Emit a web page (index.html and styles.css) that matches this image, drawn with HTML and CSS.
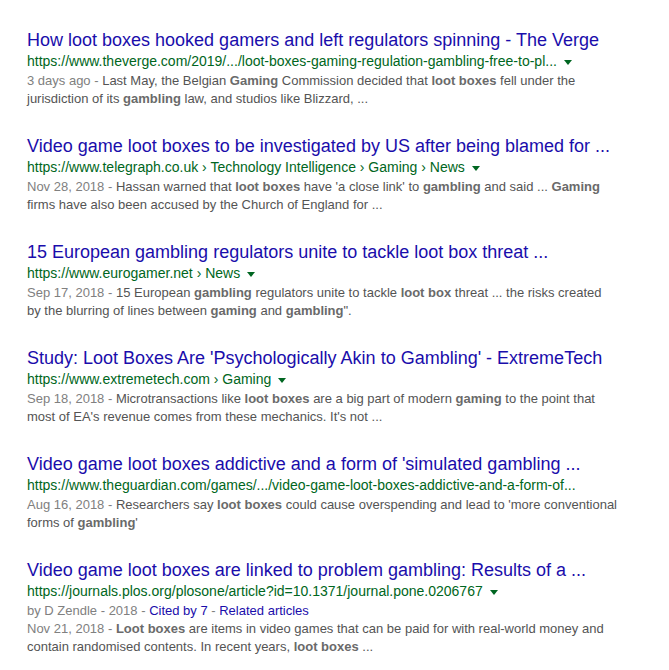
FILE: index.html
```html
<!DOCTYPE html>
<html>
<head>
    <meta charset="UTF-8">
    <meta name="viewport" content="width=device-width, initial-scale=1.0">
    <title>loot boxes gambling - Search</title>
    <link rel="stylesheet" href="styles.css">
</head>
<body>
    <div id="results">
        <div class="result">
            <h3 class="title"><a href="#">How loot boxes hooked gamers and left regulators spinning - The Verge</a></h3>
            <div class="url">https://www.theverge.com/2019/.../loot-boxes-gaming-regulation-gambling-free-to-pl... <span class="arrow"></span></div>
            <div class="snippet"><span class="date">3 days ago - </span>Last May, the Belgian <b>Gaming</b> Commission decided that <b>loot boxes</b> fell under the jurisdiction of its <b>gambling</b> law, and studios like Blizzard, ...</div>
        </div>
        <div class="result">
            <h3 class="title"><a href="#">Video game loot boxes to be investigated by US after being blamed for ...</a></h3>
            <div class="url">https://www.telegraph.co.uk › Technology Intelligence › Gaming › News <span class="arrow"></span></div>
            <div class="snippet"><span class="date">Nov 28, 2018 - </span>Hassan warned that <b>loot boxes</b> have 'a close link' to <b>gambling</b> and said ... <b>Gaming</b> firms have also been accused by the Church of England for ...</div>
        </div>
        <div class="result">
            <h3 class="title"><a href="#">15 European gambling regulators unite to tackle loot box threat ...</a></h3>
            <div class="url">https://www.eurogamer.net › News <span class="arrow"></span></div>
            <div class="snippet"><span class="date">Sep 17, 2018 - </span>15 European <b>gambling</b> regulators unite to tackle <b>loot box</b> threat ... the risks created by the blurring of lines between <b>gaming</b> and <b>gambling</b>".</div>
        </div>
        <div class="result">
            <h3 class="title"><a href="#">Study: Loot Boxes Are 'Psychologically Akin to Gambling' - ExtremeTech</a></h3>
            <div class="url">https://www.extremetech.com › Gaming <span class="arrow"></span></div>
            <div class="snippet"><span class="date">Sep 18, 2018 - </span>Microtransactions like <b>loot boxes</b> are a big part of modern <b>gaming</b> to the point that most of EA's revenue comes from these mechanics. It's not ...</div>
        </div>
        <div class="result">
            <h3 class="title"><a href="#">Video game loot boxes addictive and a form of 'simulated gambling ...</a></h3>
            <div class="url">https://www.theguardian.com/games/.../video-game-loot-boxes-addictive-and-a-form-of...</div>
            <div class="snippet"><span class="date">Aug 16, 2018 - </span>Researchers say <b>loot boxes</b> could cause overspending and lead to 'more conventional forms of <b>gambling</b>'</div>
        </div>
        <div class="result">
            <h3 class="title"><a href="#">Video game loot boxes are linked to problem gambling: Results of a ...</a></h3>
            <div class="url">https://journals.plos.org/plosone/article?id=10.1371/journal.pone.0206767 <span class="arrow"></span></div>
            <div class="meta">by D Zendle - 2018 - <a href="#">Cited by 7</a> - <a href="#">Related articles</a></div>
            <div class="snippet"><span class="date">Nov 21, 2018 - </span><b>Loot boxes</b> are items in video games that can be paid for with real-world money and contain randomised contents. In recent years, <b>loot boxes</b> ...</div>
        </div>
    </div>
</body>
</html>
```

FILE: styles.css
```css
body {
    margin: 0;
    background: #fff;
    font-family: "Liberation Sans", Arial, sans-serif;
}
#results {
    padding: 29px 0 0 27px;
}
.result {
    margin-bottom: 27px;
}
.title {
    margin: 0;
    font-size: 18px;
    font-weight: normal;
    line-height: 22px;
    white-space: nowrap;
}
.title a {
    color: #1a0dab;
    text-decoration: none;
}
.url {
    font-size: 14px;
    line-height: 20px;
    color: #006621;
    white-space: nowrap;
}
.arrow {
    display: inline-block;
    margin-left: 3px;
    vertical-align: middle;
    border-top: 5px solid #006621;
    border-left: 4px solid transparent;
    border-right: 4px solid transparent;
}
.meta {
    margin-top: 1px;
    font-size: 13px;
    line-height: 18px;
    color: #808080;
}
.meta a {
    color: #1a0dab;
    text-decoration: none;
}
.meta + .snippet {
    margin-top: 0;
}
.snippet {
    margin-top: 1px;
    width: 590px;
    font-size: 13px;
    line-height: 18px;
    color: #545454;
}
.snippet b {
    color: #6a6a6a;
}
.date {
    color: #808080;
}
```
